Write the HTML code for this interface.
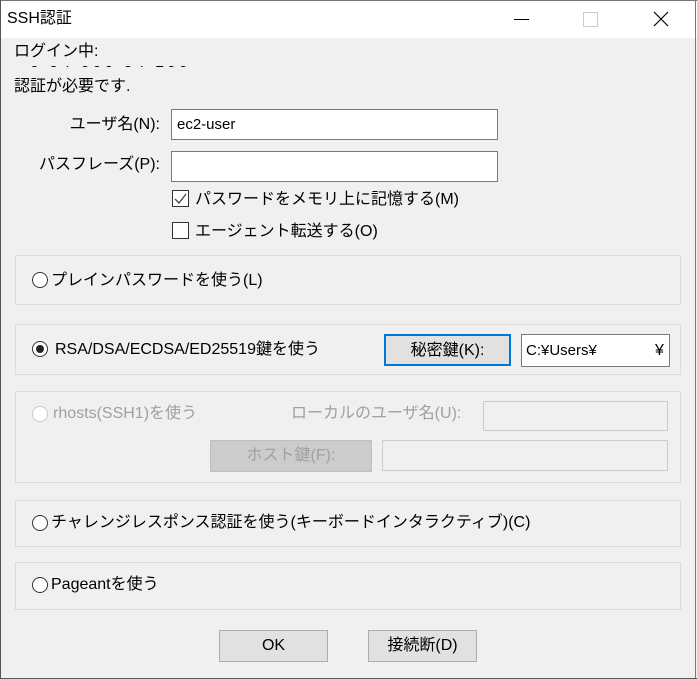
<!DOCTYPE html>
<html><head><meta charset="utf-8"><style>
*{margin:0;padding:0;box-sizing:border-box}
body{width:697px;height:679px;background:#f0f0f0;position:relative;overflow:hidden;font-family:"Liberation Sans","Noto Sans CJK JP",sans-serif;font-size:16px;color:#000}
.a{position:absolute;white-space:nowrap;line-height:18px}
.t{position:absolute;left:0;top:0;width:697px;height:38px;background:#fff}
.box{position:absolute;left:15px;width:666px;border:1px solid #dcdcdc}
.inp{position:absolute;background:#fff;border:1px solid #7a7a7a}
.dis{background:#f0f0f0;border:1px solid #cccccc}
.rad{position:absolute;width:16px;height:16px;border:1px solid #333;border-radius:50%;background:#fff}
.chk{position:absolute;width:17px;height:17px;border:1px solid #333;background:#fff}
.btn{position:absolute;background:#e1e1e1;border:1px solid #adadad;text-align:center;line-height:29px}
.g{color:#a0a0a0}
</style></head><body>
<div class="t"></div>
<div style="position:absolute;left:0;top:0;width:697px;height:1px;background:#777"></div>
<div style="position:absolute;left:0;top:0;width:1px;height:679px;background:#555"></div>
<div style="position:absolute;right:1px;top:0;width:1px;height:679px;background:#777"></div>
<div style="position:absolute;left:0;bottom:0;width:697px;height:1px;background:#555"></div>
<div class="a" style="left:7px;top:10px;font-size:16px">SSH認証</div>
<div style="position:absolute;left:514px;top:19px;width:15px;height:1px;background:#000"></div>
<div style="position:absolute;left:583px;top:12px;width:15px;height:15px;border:1px solid #ccc"></div>
<svg style="position:absolute;left:653px;top:11px" width="16" height="16"><path d="M1 1L15 15M15 1L1 15" stroke="#000" stroke-width="1.2"/></svg>
<div class="a" style="left:14px;top:43px">ログイン中:</div>
<div style="position:absolute;left:30px;top:66px;width:230px;height:4px;overflow:hidden"><div class="a" style="top:-12px;left:0;letter-spacing:3px">0 54 000 54 100 &nbsp; &nbsp; &nbsp; &nbsp; &nbsp; 1 &nbsp; 1</div></div>
<div class="a" style="left:14px;top:78px">認証が必要です.</div>
<div class="a" style="right:537px;top:116px">ユーザ名(N):</div>
<div class="inp" style="left:171px;top:109px;width:327px;height:31px"><div class="a" style="left:5px;top:6px;font-size:15px">ec2-user</div></div>
<div class="a" style="right:537px;top:156px">パスフレーズ(P):</div>
<div class="inp" style="left:171px;top:151px;width:327px;height:31px"></div>
<div class="chk" style="left:172px;top:190px"><svg width="15" height="15" style="position:absolute;left:0;top:0"><path d="M2 8L6 12L13 3" stroke="#444" stroke-width="1.3" fill="none"/></svg></div>
<div class="a" style="left:195px;top:191px">パスワードをメモリ上に記憶する(M)</div>
<div class="chk" style="left:172px;top:222px"></div>
<div class="a" style="left:195px;top:223px">エージェント転送する(O)</div>
<div class="box" style="top:255px;height:50px"></div>
<div class="rad" style="left:32px;top:272px"></div>
<div class="a" style="left:51px;top:272px">プレインパスワードを使う(L)</div>
<div class="box" style="top:324px;height:51px"></div>
<div class="rad" style="left:32px;top:341px"><div style="position:absolute;left:3px;top:3px;width:8px;height:8px;border-radius:50%;background:#222"></div></div>
<div class="a" style="left:55px;top:341px">RSA/DSA/ECDSA/ED25519鍵を使う</div>
<div class="btn" style="left:384px;top:334px;width:127px;height:32px;border:2px solid #0078d7">秘密鍵(K):</div>
<div class="inp" style="left:521px;top:334px;width:149px;height:33px"><div class="a" style="left:4px;top:7px;font-size:15px">C:¥Users¥</div><div class="a" style="left:133px;top:7px">¥</div></div>
<div class="box" style="top:391px;height:92px"></div>
<div class="rad" style="left:32px;top:406px;border-color:#c8c8c8"></div>
<div class="a g" style="left:53px;top:405px">rhosts(SSH1)を使う</div>
<div class="a g" style="left:291px;top:405px">ローカルのユーザ名(U):</div>
<div class="inp dis" style="left:483px;top:401px;width:185px;height:30px"></div>
<div class="btn g" style="left:210px;top:440px;width:162px;height:32px;background:#cccccc;border-color:#bfbfbf">ホスト鍵(F):</div>
<div class="inp dis" style="left:382px;top:440px;width:286px;height:31px"></div>
<div class="box" style="top:500px;height:47px"></div>
<div class="rad" style="left:32px;top:515px"></div>
<div class="a" style="left:51px;top:514px">チャレンジレスポンス認証を使う(キーボードインタラクティブ)(C)</div>
<div class="box" style="top:562px;height:48px"></div>
<div class="rad" style="left:32px;top:577px"></div>
<div class="a" style="left:51px;top:576px">Pageantを使う</div>
<div class="btn" style="left:219px;top:630px;width:109px;height:32px">OK</div>
<div class="btn" style="left:368px;top:630px;width:109px;height:32px">接続断(D)</div>
</body></html>
